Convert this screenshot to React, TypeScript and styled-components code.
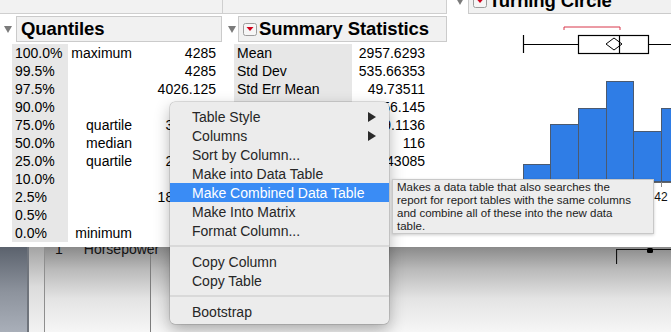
import React from "react";
import styled, { createGlobalStyle } from "styled-components";

const GlobalStyle = createGlobalStyle`
  html, body {
    margin: 0;
    padding: 0;
    background: #ffffff;
  }
  body {
    font-family: "Liberation Sans", Arial, sans-serif;
    color: #000;
  }
`;

const Page = styled.div`
  position: relative;
  width: 671px;
  height: 332px;
  display: flex;
  flex-direction: column;
  overflow: hidden;
`;

const Window = styled.div`
  height: 247px;
  flex-shrink: 0;
  display: flex;
  background: #ffffff;
  overflow: hidden;
`;

const Column = styled.div<{ $width: number }>`
  width: ${(p) => p.$width}px;
  flex-shrink: 0;
  display: flex;
  flex-direction: column;
`;

const TopBand = styled.div<{ $width: number }>`
  width: ${(p) => p.$width}px;
  height: 13px;
  flex-shrink: 0;
  background: #f2f2f2;
  border-bottom: 1px solid #cfcfcf;
  border-right: 1px solid #cfcfcf;
  box-sizing: content-box;
`;

const OutlineHead = styled.div<{ $pad: number; $gap: number; $raise?: boolean }>`
  display: flex;
  align-items: center;
  height: 26px;
  margin-top: ${(p) => (p.$raise ? "-12px" : "2px")};
  padding-left: ${(p) => p.$pad}px;
  gap: ${(p) => p.$gap}px;
`;

const Disclosure = styled.div`
  width: 0;
  height: 0;
  flex-shrink: 0;
  border-left: 4px solid transparent;
  border-right: 4px solid transparent;
  border-top: 7px solid #7b7b7b;
`;

const HeaderBox = styled.div<{ $width: number }>`
  width: ${(p) => p.$width}px;
  height: 26px;
  flex-shrink: 0;
  box-sizing: border-box;
  display: flex;
  align-items: center;
  gap: 2px;
  padding-left: 4px;
  background: #f1f1f1;
  border: 1px solid #cbcbcb;
  font-size: 18.5px;
  font-weight: bold;
  white-space: nowrap;
  letter-spacing: -0.1px;
`;

const Table = styled.div<{ $cols: string; $indent: number }>`
  display: grid;
  grid-template-columns: ${(p) => p.$cols};
  grid-auto-rows: 18px;
  margin-left: ${(p) => p.$indent}px;
  margin-top: 2px;
  font-size: 14px;
`;

const Cell = styled.div<{ $shaded?: boolean; $align?: "left" | "right" }>`
  display: flex;
  align-items: center;
  justify-content: ${(p) => (p.$align === "right" ? "flex-end" : "flex-start")};
  padding: 0 2px 0 3px;
  background: ${(p) => (p.$shaded ? "#e7e7e7" : "transparent")};
  white-space: nowrap;
  overflow: hidden;
`;

const ChartSvg = styled.svg`
  display: block;
  flex-shrink: 0;
`;

const Backdrop = styled.div`
  flex: 1;
  display: flex;
  overflow: hidden;
  background: linear-gradient(#8a8a8a 0px, #b9b9b9 22px, #e4e4e4 52px, #f6f6f6 85px);
`;

const Sidebar = styled.div`
  width: 27px;
  flex-shrink: 0;
  background: linear-gradient(#5b626d, #8d939d 45px, #a9afb9);
  border-right: 2px solid #6f747c;
`;

const SideStrip = styled.div`
  width: 15px;
  flex-shrink: 0;
  background: linear-gradient(#a4a4a4, #dcdcdc 40px, #f2f2f2);
  border-right: 1px solid #8e8e8e;
`;

const DataColumn = styled.div`
  width: 106px;
  flex-shrink: 0;
  display: flex;
  gap: 21px;
  padding-left: 10px;
  box-sizing: border-box;
  border-right: 1px solid #7c7c7c;
  font-size: 14px;
  line-height: 16px;
  color: #111;
`;

const DataText = styled.span`
  margin-top: -6px;
`;

const Spacer = styled.div`
  flex: 1;
`;

const Menu = styled.div`
  position: absolute;
  left: 170px;
  top: 102px;
  width: 219px;
  padding: 5px 0 3px;
  background: #ececec;
  border-radius: 5px;
  box-shadow: 0 0 0 0.5px rgba(0, 0, 0, 0.22), 0 6px 16px rgba(0, 0, 0, 0.3);
  font-size: 14px;
`;

const MenuItem = styled.div<{ $active?: boolean }>`
  height: 19px;
  display: flex;
  align-items: center;
  justify-content: space-between;
  padding: 0 13px 0 22px;
  color: ${(p) => (p.$active ? "#ffffff" : "#262626")};
  background: ${(p) => (p.$active ? "#3a8cf5" : "transparent")};
  white-space: nowrap;
`;

const MenuSeparator = styled.div`
  height: 2px;
  margin: 5px 0;
  background: #d9d9d9;
`;

const Tooltip = styled.div`
  position: absolute;
  left: 392px;
  top: 179px;
  width: 262px;
  height: 55px;
  box-sizing: border-box;
  padding: 1px 0 0 4px;
  background: #ededed;
  border: 1px solid #c8c8c8;
  box-shadow: 0 1px 3px rgba(0, 0, 0, 0.2);
  font-size: 11.5px;
  line-height: 13px;
  color: #1c1c1c;
  white-space: nowrap;
`;

const quantiles = [
  ["100.0%", "maximum", "4285"],
  ["99.5%", "", "4285"],
  ["97.5%", "", "4026.125"],
  ["90.0%", "", "3631.5"],
  ["75.0%", "quartile", "3225.25"],
  ["50.0%", "median", "2920"],
  ["25.0%", "quartile", "2585.75"],
  ["10.0%", "", "2414.5"],
  ["2.5%", "", "1887.925"],
  ["0.5%", "", "1800"],
  ["0.0%", "minimum", "1800"],
];

const summary = [
  ["Mean", "2957.6293"],
  ["Std Dev", "535.66353"],
  ["Std Err Mean", "49.73511"],
  ["Upper 95% Mean", "3056.145"],
  ["Lower 95% Mean", "2859.1136"],
  ["N", "116"],
  ["Sum", "343085"],
];

const bars = [
  [68, 95, 150],
  [95, 123, 110],
  [123, 151, 94],
  [151, 178, 67],
  [178, 206, 117],
  [206, 234, 94],
];

function RedTriangleIcon() {
  return (
    <svg width="14" height="13" viewBox="0 0 14 13" style={{ flexShrink: 0 }}>
      <rect x="0.5" y="0.5" width="13" height="12" rx="2" fill="#f6f6f6" stroke="#9c9c9c" />
      <polygon points="3.5,4 10.5,4 7,8" fill="#d0021b" />
    </svg>
  );
}

function SubmenuArrow() {
  return (
    <svg width="8" height="10" viewBox="0 0 8 10">
      <polygon points="0,0 8,5 0,10" fill="#2a2a2a" />
    </svg>
  );
}

function TurningCircleChart() {
  return (
    <ChartSvg width={216} height={233} viewBox="0 0 216 233">
      {/* shortest half bracket */}
      <polyline points="109,16 109,13 165,13 165,16" fill="none" stroke="#d8364b" strokeWidth="1" />
      {/* box plot */}
      <line x1="68.5" y1="21" x2="68.5" y2="39" stroke="#000" strokeWidth="1.2" />
      <line x1="68" y1="30.5" x2="123" y2="30.5" stroke="#000" strokeWidth="1" />
      <rect x="123.5" y="21.5" width="70" height="18" fill="none" stroke="#000" strokeWidth="1.2" />
      <line x1="164.5" y1="21" x2="164.5" y2="40" stroke="#000" strokeWidth="1.2" />
      <polygon points="151,30 159,24 167,30 159,36" fill="none" stroke="#000" strokeWidth="1" />
      <line x1="194" y1="30.5" x2="216" y2="30.5" stroke="#000" strokeWidth="1" />
      {/* histogram */}
      {bars.map(([x0, x1, top]) => (
        <rect
          key={x0}
          x={x0 + 0.5}
          y={top + 0.5}
          width={x1 - x0}
          height={167 - top}
          fill="#2f7de6"
          stroke="#4b5a70"
          strokeWidth="1"
        />
      ))}
      <line x1="68" y1="168.5" x2="216" y2="168.5" stroke="#666" strokeWidth="1" />
      <line x1="206.5" y1="168" x2="206.5" y2="173" stroke="#888" strokeWidth="1" />
      <text x="206" y="187" fontSize="12" textAnchor="middle" fill="#111" fontFamily="Liberation Sans, Arial, sans-serif">
        42
      </text>
    </ChartSvg>
  );
}

export default function App() {
  return (
    <>
      <GlobalStyle />
      <Page>
        <Window>
          <Column $width={223}>
            <TopBand $width={222} />
            <OutlineHead $pad={4} $gap={4}>
              <Disclosure />
              <HeaderBox $width={206}>Quantiles</HeaderBox>
            </OutlineHead>
            <Table $cols="56px 66px 84px" $indent={12}>
              {quantiles.map(([pct, label, value]) => (
                <React.Fragment key={pct}>
                  <Cell $shaded>{pct}</Cell>
                  <Cell $align="right">{label}</Cell>
                  <Cell $align="right">{value}</Cell>
                </React.Fragment>
              ))}
            </Table>
          </Column>

          <Column $width={232}>
            <TopBand $width={223} />
            <OutlineHead $pad={5} $gap={2}>
              <Disclosure />
              <HeaderBox $width={209}>
                <RedTriangleIcon />
                Summary Statistics
              </HeaderBox>
            </OutlineHead>
            <Table $cols="118px 75px" $indent={11}>
              {summary.map(([label, value]) => (
                <React.Fragment key={label}>
                  <Cell $shaded>{label}</Cell>
                  <Cell $align="right">{value}</Cell>
                </React.Fragment>
              ))}
            </Table>
          </Column>

          <Column $width={216}>
            <OutlineHead $pad={1} $gap={4} $raise>
              <Disclosure />
              <HeaderBox $width={220}>
                <RedTriangleIcon />
                Turning Circle
              </HeaderBox>
            </OutlineHead>
            <TurningCircleChart />
          </Column>
        </Window>

        <Backdrop>
          <Sidebar />
          <SideStrip />
          <DataColumn>
            <DataText>1</DataText>
            <DataText>Horsepower</DataText>
          </DataColumn>
          <Spacer />
          <svg width="55" height="20" viewBox="0 0 55 20" style={{ flexShrink: 0 }}>
            <line x1="0.5" y1="2" x2="0.5" y2="17" stroke="#111" strokeWidth="1.2" />
            <line x1="0" y1="2.5" x2="55" y2="2.5" stroke="#111" strokeWidth="1" />
            <rect x="31" y="1" width="6" height="5" rx="1.5" fill="#000" />
          </svg>
        </Backdrop>

        <Menu>
          <MenuItem>
            Table Style
            <SubmenuArrow />
          </MenuItem>
          <MenuItem>
            Columns
            <SubmenuArrow />
          </MenuItem>
          <MenuItem>Sort by Column...</MenuItem>
          <MenuItem>Make into Data Table</MenuItem>
          <MenuItem $active>Make Combined Data Table</MenuItem>
          <MenuItem>Make Into Matrix</MenuItem>
          <MenuItem>Format Column...</MenuItem>
          <MenuSeparator />
          <MenuItem>Copy Column</MenuItem>
          <MenuItem>Copy Table</MenuItem>
          <MenuSeparator />
          <MenuItem>Bootstrap</MenuItem>
        </Menu>

        <Tooltip>
          Makes a data table that also searches the
          <br />
          report for report tables with the same columns
          <br />
          and combine all of these into the new data
          <br />
          table.
        </Tooltip>
      </Page>
    </>
  );
}
